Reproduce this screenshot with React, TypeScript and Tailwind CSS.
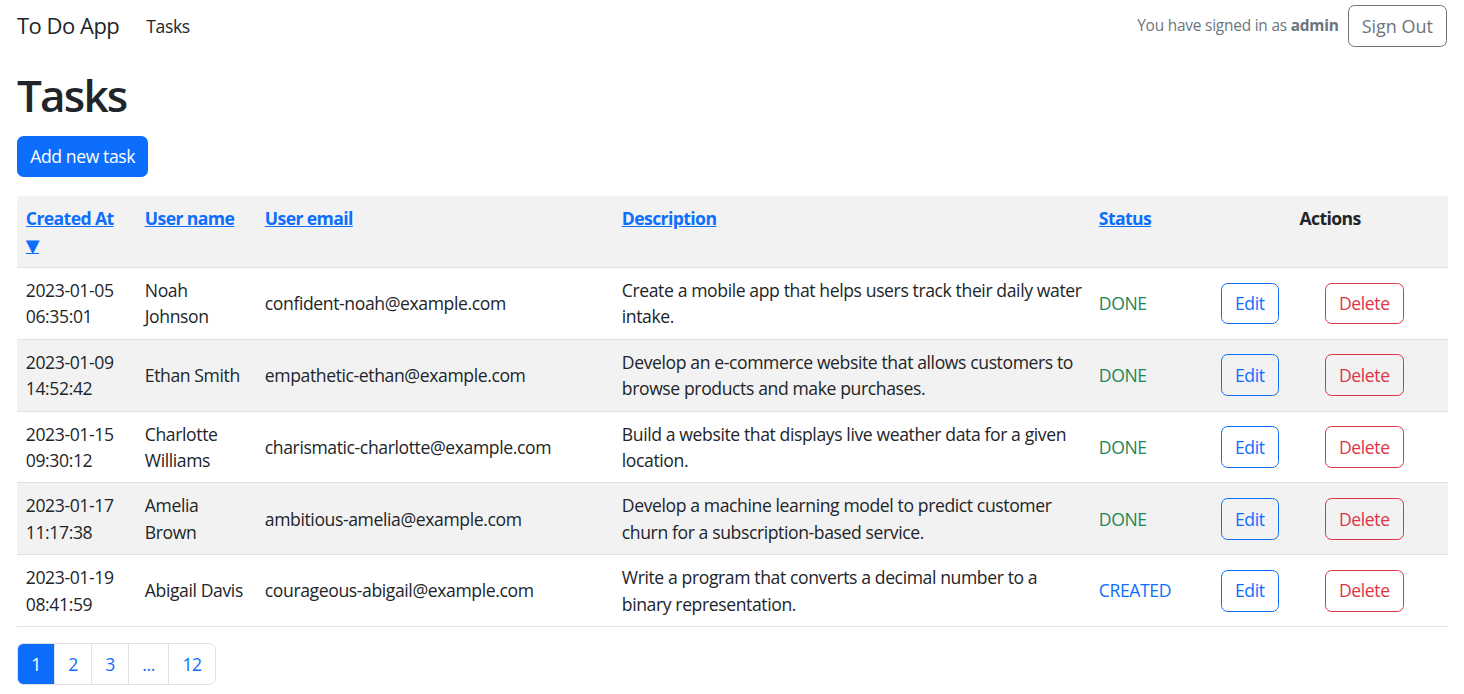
import React from "react";

type Row = {
  date: string;
  time: string;
  name: React.ReactNode;
  email: string;
  d1: string;
  d2: string;
  status: "DONE" | "CREATED";
};

const rows: Row[] = [
  { date: "2023-01-05", time: "06:35:01", name: <>Noah<br />Johnson</>, email: "confident-noah@example.com", d1: "Create a mobile app that helps users track their daily water", d2: "intake.", status: "DONE" },
  { date: "2023-01-09", time: "14:52:42", name: "Ethan Smith", email: "empathetic-ethan@example.com", d1: "Develop an e-commerce website that allows customers to", d2: "browse products and make purchases.", status: "DONE" },
  { date: "2023-01-15", time: "09:30:12", name: <>Charlotte<br />Williams</>, email: "charismatic-charlotte@example.com", d1: "Build a website that displays live weather data for a given", d2: "location.", status: "DONE" },
  { date: "2023-01-17", time: "11:17:38", name: <>Amelia<br />Brown</>, email: "ambitious-amelia@example.com", d1: "Develop a machine learning model to predict customer", d2: "churn for a subscription-based service.", status: "DONE" },
  { date: "2023-01-19", time: "08:41:59", name: "Abigail Davis", email: "courageous-abigail@example.com", d1: "Write a program that converts a decimal number to a", d2: "binary representation.", status: "CREATED" },
];

const font = { fontFamily: '"Open Sans", "Noto Sans", sans-serif' };

export default function App() {
  return (
    <div className="min-h-[694px] bg-white text-[#212529] text-[17.6px] leading-[26.4px] tracking-[-0.4px]" style={font}>
      <nav className="flex items-center justify-between px-[17px] py-[5px]">
        <div className="flex items-center">
          <span className="text-[22px] leading-[33px] mr-[18px] tracking-[-0.5px]">To Do App</span>
          <span className="px-[9px] text-[17.6px]">Tasks</span>
        </div>
        <div className="flex items-center">
          <span className="text-[15.4px] text-[#6c757d] mr-[9px] tracking-[-0.2px]">
            You have signed in as <b className="font-bold">admin</b>
          </span>
          <button className="h-[41.8px] px-[13px] border border-[#6c757d] rounded-[6.6px] text-[#6c757d] text-[18px] tracking-[0px]">
            Sign Out
          </button>
        </div>
      </nav>

      <main className="px-[17px]">
        <h1 className="mt-[17px] mb-[14px] text-[44px] leading-[52.8px] font-semibold tracking-[-1.8px]">Tasks</h1>
        <button className="h-[41.8px] px-[13.2px] bg-[#0d6efd] text-white rounded-[6.6px] text-[17.6px]">
          Add new task
        </button>

        <table className="mt-[19px] w-[1431px] table-fixed border-collapse">
          <colgroup>
            <col className="w-[119px]" />
            <col className="w-[120px]" />
            <col className="w-[357px]" />
            <col className="w-[477px]" />
            <col className="w-[122px]" />
            <col className="w-[104px]" />
            <col className="w-[132px]" />
          </colgroup>
          <thead>
            <tr className="bg-[#f2f2f2] border-b border-[#dee2e6]">
              {["Created At", "User name", "User email", "Description", "Status"].map((h, i) => (
                <th key={h} className="text-left align-top px-[8.8px] pt-[8.8px] pb-[8px] font-bold tracking-[-0.6px]">
                  <a href="#" className="text-[#0d6efd] underline">
                    {h}
                    {i === 0 && (
                      <>
                        <br />
                        <span className="text-[18px] leading-[26.4px] font-['DejaVu_Sans',_sans-serif]">▼</span>
                      </>
                    )}
                  </a>
                </th>
              ))}
              <th colSpan={2} className="text-center align-top px-[8.8px] pt-[8.8px] pb-[8px] font-bold tracking-[-0.6px]">
                Actions
              </th>
            </tr>
          </thead>
          <tbody>
            {rows.map((r, i) => (
              <tr key={r.email} className={`border-b border-[#dee2e6] ${i % 2 === 1 ? "bg-[#f2f2f2]" : "bg-white"}`}>
                <td className="px-[8.8px] py-[9px] align-middle whitespace-nowrap">
                  {r.date}
                  <br />
                  {r.time}
                </td>
                <td className="px-[8.8px] py-[9px] align-middle whitespace-nowrap">{r.name}</td>
                <td className="px-[8.8px] py-[9px] align-middle whitespace-nowrap">{r.email}</td>
                <td className="px-[8.8px] py-[9px] align-middle whitespace-nowrap">
                  {r.d1}
                  <br />
                  {r.d2}
                </td>
                <td className={`px-[8.8px] py-[9px] align-middle ${r.status === "DONE" ? "text-[#198754]" : "text-[#0d6efd]"}`}>
                  {r.status}
                </td>
                <td className="px-[8.8px] py-[9px] align-middle">
                  <button className="h-[41.8px] px-[13.2px] border border-[#0d6efd] text-[#0d6efd] rounded-[6.6px]">Edit</button>
                </td>
                <td className="px-[8.8px] py-[9px] align-middle">
                  <button className="h-[41.8px] px-[13.2px] border border-[#dc3545] text-[#dc3545] rounded-[6.6px]">Delete</button>
                </td>
              </tr>
            ))}
          </tbody>
        </table>

        <div className="mt-[16px] flex">
          {["1", "2", "3", "...", "12"].map((p, i) => (
            <a
              key={p}
              href="#"
              className={`h-[42px] px-[13.2px] flex items-center border border-[#dee2e6] ${i > 0 ? "-ml-px" : ""} ${
                i === 0 ? "bg-[#0d6efd] border-[#0d6efd] text-white rounded-l-[6.6px]" : "text-[#0d6efd] bg-white"
              } ${i === 4 ? "rounded-r-[6.6px]" : ""}`}
            >
              {p}
            </a>
          ))}
        </div>
      </main>
    </div>
  );
}
